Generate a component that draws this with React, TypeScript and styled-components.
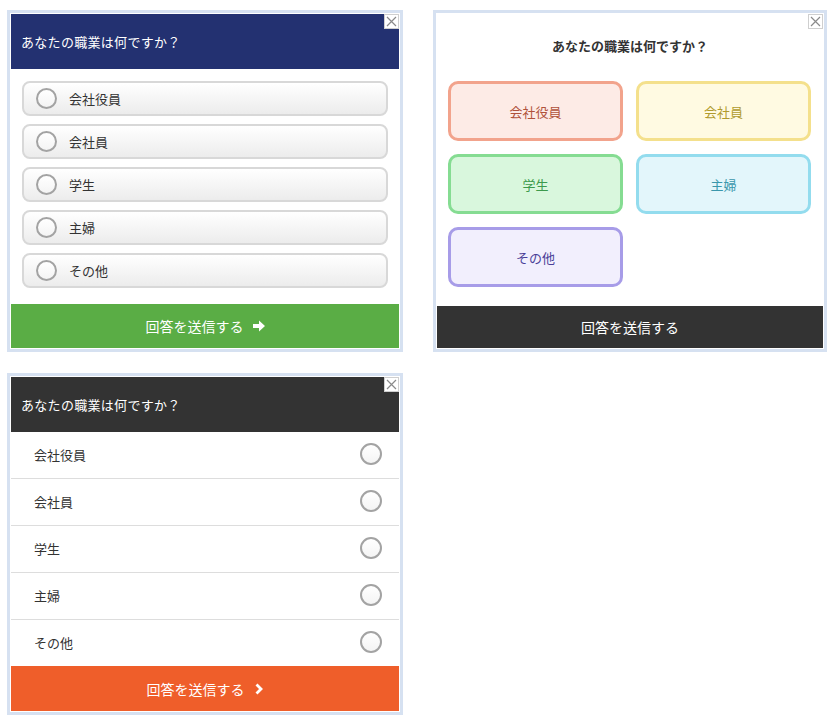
import React from "react"
import styled, { createGlobalStyle } from "styled-components"

const GlobalStyle = createGlobalStyle`
  html, body {
    margin: 0;
    padding: 0;
    background: #ffffff;
  }
  body {
    font-family: "Noto Sans CJK JP", "Noto Sans", sans-serif;
    color: #333333;
  }
`

const OPTIONS = ["会社役員", "会社員", "学生", "主婦", "その他"]
const QUESTION = "あなたの職業は何ですか？"
const SUBMIT = "回答を送信する"

const tiles: Record<string, { border: string; bg: string; fg: string }> = {
  会社役員: { border: "#f2a38c", bg: "#fdebe6", fg: "#b0523a" },
  会社員: { border: "#f4e08c", bg: "#fffae2", fg: "#b09a2e" },
  学生: { border: "#85dc92", bg: "#d9f7dd", fg: "#3c9a4c" },
  主婦: { border: "#93dcee", bg: "#e3f6fb", fg: "#3a97ac" },
  その他: { border: "#a79ce8", bg: "#f2effd", fg: "#4b3f98" },
}

const Page = styled.div`
  display: grid;
  grid-template-columns: 396px 394px;
  grid-template-rows: 342px 342px;
  column-gap: 30px;
  row-gap: 21px;
  padding: 10px 0 0 7px;
`

const Panel = styled.div`
  position: relative;
  display: flex;
  flex-direction: column;
  box-sizing: border-box;
  border: 3px solid #d6e1f1;
  padding: 1px;
  background: #ffffff;
`

const Close = styled.button`
  position: absolute;
  top: 1px;
  right: 1px;
  width: 15px;
  height: 15px;
  padding: 0;
  border: 1px solid #cfcfcf;
  background: #ffffff;
  color: #8a8a8a;
  display: flex;
  align-items: center;
  justify-content: center;
  cursor: pointer;
`

const Header = styled.div<{ $bg: string }>`
  height: 55px;
  flex: 0 0 55px;
  display: flex;
  align-items: center;
  padding-left: 10px;
  background: ${({ $bg }) => $bg};
  color: #ffffff;
  font-size: 13px;
  letter-spacing: 0.3px;
`

const PillList = styled.div`
  display: flex;
  flex-direction: column;
  gap: 8px;
  padding: 12px 11px 15px;
`

const Pill = styled.div`
  height: 35px;
  box-sizing: border-box;
  display: flex;
  align-items: center;
  gap: 12px;
  padding-left: 12px;
  border: 2px solid #d8d8d8;
  border-radius: 8px;
  background: linear-gradient(#ffffff, #ececec);
  font-size: 13px;
  color: #333333;
`

const Radio = styled.span<{ $size: number }>`
  width: ${({ $size }) => $size}px;
  height: ${({ $size }) => $size}px;
  box-sizing: border-box;
  border-radius: 50%;
  border: 2px solid #a3a3a3;
  background: linear-gradient(#ffffff, #f4f4f4);
  flex: 0 0 auto;
`

const Submit = styled.button<{ $bg: string; $h: number }>`
  height: ${({ $h }) => $h}px;
  flex: 0 0 ${({ $h }) => $h}px;
  border: none;
  margin-top: auto;
  background: ${({ $bg }) => $bg};
  color: #ffffff;
  font-family: inherit;
  font-size: 14px;
  display: flex;
  align-items: center;
  justify-content: center;
  gap: 9px;
  cursor: pointer;
`

const Title = styled.div`
  padding-top: 21px;
  margin-bottom: 21px;
  height: 46px;
  box-sizing: border-box;
  line-height: 22px;
  text-align: center;
  font-size: 13px;
  font-weight: bold;
  color: #333333;
`

const TileGrid = styled.div`
  display: grid;
  grid-template-columns: 175px 175px;
  grid-auto-rows: 60px;
  gap: 13px;
  padding: 0 12px 0 11px;
`

const Tile = styled.div<{ $border: string; $bg: string; $fg: string }>`
  box-sizing: border-box;
  display: flex;
  align-items: center;
  justify-content: center;
  border: 3px solid ${({ $border }) => $border};
  border-radius: 10px;
  background: ${({ $bg }) => $bg};
  color: ${({ $fg }) => $fg};
  font-size: 13px;
`

const RowList = styled.div`
  display: flex;
  flex-direction: column;
`

const Row = styled.div`
  height: 46px;
  box-sizing: border-box;
  display: flex;
  align-items: center;
  justify-content: space-between;
  padding: 0 17px 2px 23px;
  font-size: 13px;
  color: #333333;
  & + & {
    border-top: 1px solid #dddddd;
    height: 47px;
  }
`

const CloseButton = () => (
  <Close aria-label="close">
    <svg width="11" height="11" viewBox="0 0 11 11">
      <path d="M1 1 L10 10 M10 1 L1 10" stroke="currentColor" strokeWidth="1.2" />
    </svg>
  </Close>
)

const BlockArrow = () => (
  <svg width="12" height="12" viewBox="0 0 12 12">
    <polygon points="0,4 6,4 6,0.5 12,6 6,11.5 6,8 0,8" fill="currentColor" />
  </svg>
)

const Chevron = () => (
  <svg width="10" height="12" viewBox="0 0 10 12">
    <polyline points="2.5,1.5 7,6 2.5,10.5" fill="none" stroke="currentColor" strokeWidth="2.8" />
  </svg>
)

const PillPanel = () => (
  <Panel>
    <Header $bg="#233171">{QUESTION}</Header>
    <PillList>
      {OPTIONS.map((o) => (
        <Pill key={o}>
          <Radio $size={21} />
          {o}
        </Pill>
      ))}
    </PillList>
    <Submit $bg="#5aad45" $h={44}>
      {SUBMIT}
      <BlockArrow />
    </Submit>
    <CloseButton />
  </Panel>
)

const TilePanel = () => (
  <Panel>
    <Title>{QUESTION}</Title>
    <TileGrid>
      {OPTIONS.map((o) => (
        <Tile key={o} $border={tiles[o].border} $bg={tiles[o].bg} $fg={tiles[o].fg}>
          {o}
        </Tile>
      ))}
    </TileGrid>
    <Submit $bg="#333333" $h={42}>
      {SUBMIT}
    </Submit>
    <CloseButton />
  </Panel>
)

const RowPanel = () => (
  <Panel>
    <Header $bg="#333333">{QUESTION}</Header>
    <RowList>
      {OPTIONS.map((o) => (
        <Row key={o}>
          {o}
          <Radio $size={22} />
        </Row>
      ))}
    </RowList>
    <Submit $bg="#ef5e2a" $h={45}>
      {SUBMIT}
      <Chevron />
    </Submit>
    <CloseButton />
  </Panel>
)

export default function App() {
  return (
    <>
      <GlobalStyle />
      <Page>
        <PillPanel />
        <TilePanel />
        <RowPanel />
      </Page>
    </>
  )
}
